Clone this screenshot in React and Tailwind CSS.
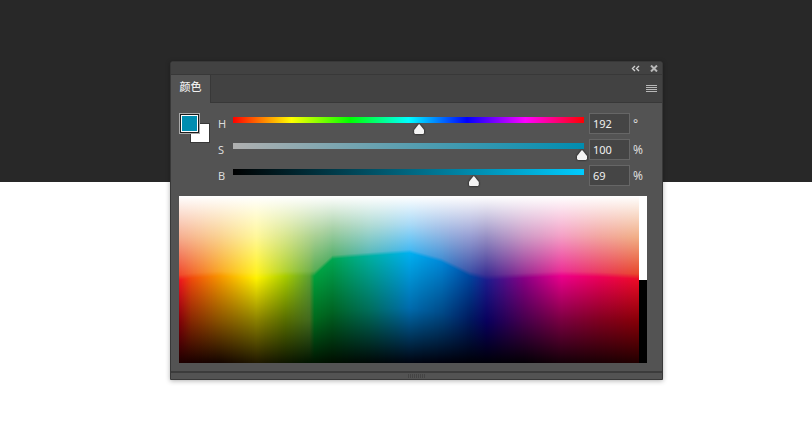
import React, { useEffect, useRef, useState } from "react";

// One entry per column of the ramp: x, height of the full-strength ridge,
// then the tint and rim above it, the ridge itself, the shade below it and the base.
const RAMP = [
  { x: 0, ridge: 84, tint: [245, 172, 142], rim: [240, 70, 44], full: [237, 20, 30], shade: [128, 0, 8], base: [30, 0, 0] },
  { x: 12, ridge: 82, tint: [247, 184, 144], rim: [242, 104, 46], full: [240, 74, 12], shade: [134, 40, 2], base: [26, 0, 0] },
  { x: 40, ridge: 80, tint: [250, 210, 146], rim: [249, 168, 40], full: [248, 150, 0], shade: [138, 84, 0], base: [20, 4, 0] },
  { x: 77, ridge: 82, tint: [255, 247, 152], rim: [255, 242, 32], full: [255, 242, 0], shade: [138, 128, 0], base: [32, 24, 0] },
  { x: 106, ridge: 80, tint: [216, 230, 144], rim: [178, 210, 50], full: [168, 204, 0], shade: [88, 110, 0], base: [14, 22, 0] },
  { x: 130, ridge: 80, tint: [178, 212, 146], rim: [116, 178, 76], full: [92, 160, 52], shade: [66, 106, 30], base: [0, 20, 0] },
  { x: 135, ridge: 80, tint: [170, 208, 148], rim: [88, 172, 84], full: [0, 160, 60], shade: [0, 104, 28], base: [0, 20, 0] },
  { x: 153, ridge: 63, tint: [170, 210, 170], rim: [92, 178, 112], full: [0, 166, 80], shade: [0, 100, 34], base: [0, 14, 0] },
  { x: 190, ridge: 60, tint: [174, 218, 210], rim: [92, 186, 186], full: [0, 176, 160], shade: [0, 110, 92], base: [0, 8, 6] },
  { x: 230, ridge: 57, tint: [168, 218, 247], rim: [72, 186, 242], full: [0, 176, 240], shade: [0, 108, 174], base: [0, 4, 16] },
  { x: 262, ridge: 66, tint: [162, 190, 230], rim: [72, 146, 212], full: [0, 134, 214], shade: [0, 74, 136], base: [0, 0, 12] },
  { x: 290, ridge: 80, tint: [152, 160, 212], rim: [62, 84, 168], full: [0, 70, 158], shade: [0, 26, 94], base: [0, 0, 8] },
  { x: 307, ridge: 84, tint: [148, 140, 194], rim: [58, 46, 146], full: [28, 28, 140], shade: [8, 0, 92], base: [0, 0, 8] },
  { x: 345, ridge: 82, tint: [204, 154, 198], rim: [152, 48, 148], full: [136, 0, 132], shade: [70, 0, 76], base: [4, 0, 6] },
  { x: 382, ridge: 80, tint: [244, 160, 198], rim: [236, 48, 150], full: [236, 0, 140], shade: [124, 0, 66], base: [20, 0, 8] },
  { x: 420, ridge: 81, tint: [242, 166, 160], rim: [234, 60, 96], full: [236, 0, 88], shade: [128, 0, 32], base: [26, 0, 4] },
  { x: 460, ridge: 83, tint: [241, 174, 132], rim: [232, 72, 40], full: [236, 12, 36], shade: [134, 0, 6], base: [34, 0, 0] },
];
const RAMP_W = 460;
const RAMP_H = 167;

const mix = (a, b, t) => a + (b - a) * t;
const mixColor = (a, b, t) => a.map((v, i) => Math.round(mix(v, b[i], t)));
const rgb = (c) => `rgb(${c.join(",")})`;

const hsbToRgb = (h, s, b) => {
  const f = (n) => {
    const k = (n + h / 60) % 6;
    return Math.round(255 * (b / 100) * (1 - (s / 100) * Math.max(0, Math.min(k, 4 - k, 1))));
  };
  return [f(5), f(3), f(1)];
};

function ColorRamp() {
  const ref = useRef(null);

  useEffect(() => {
    const ctx = ref.current.getContext("2d");
    for (let x = 0; x < RAMP_W; x++) {
      const i = RAMP.findIndex((c, n) => n > 0 && x <= c.x);
      const a = RAMP[i - 1];
      const b = RAMP[i];
      const t = (x - a.x) / (b.x - a.x);
      const ridge = mix(a.ridge, b.ridge, t) / RAMP_H;
      const g = ctx.createLinearGradient(0, 0, 0, RAMP_H);
      g.addColorStop(0, "#fff");
      g.addColorStop(ridge * 0.5, rgb(mixColor(a.tint, b.tint, t)));
      g.addColorStop(ridge * 0.94, rgb(mixColor(a.rim, b.rim, t)));
      g.addColorStop(ridge, rgb(mixColor(a.full, b.full, t)));
      g.addColorStop(mix(ridge, 1, 0.5), rgb(mixColor(a.shade, b.shade, t)));
      g.addColorStop(1, rgb(mixColor(a.base, b.base, t)));
      ctx.fillStyle = g;
      ctx.fillRect(x, 0, 1, RAMP_H);
    }
  }, []);

  return <canvas ref={ref} width={RAMP_W} height={RAMP_H} className="block h-[167px] w-full min-w-0 flex-1" />;
}

function ChannelRow({ id, label, unit, max, value, onChange, track }) {
  const change = (e) => onChange(Math.max(0, Math.min(max, Number(e.target.value) || 0)));

  return (
    <div className="flex h-[21px] items-center">
      <label htmlFor={id} className="w-[15px] shrink-0">{label}</label>
      <div className="h-[21px] min-w-0 flex-1 pt-1">
        <div className="h-1.5" style={{ background: track }} />
        <div className="-mr-[3px] -ml-[5px] flex">
          <input
            type="range"
            min="0"
            max={max}
            value={value}
            onChange={change}
            aria-label={`${label} slider`}
            className="m-0 mt-px h-[10px] w-full appearance-none bg-transparent drop-shadow-[0_0_1px_#111] focus:outline-none [&::-webkit-slider-thumb]:h-[10px] [&::-webkit-slider-thumb]:w-[10px] [&::-webkit-slider-thumb]:appearance-none [&::-webkit-slider-thumb]:bg-[#f4f4f4] [&::-webkit-slider-thumb]:[clip-path:polygon(50%_0,60%_10%,100%_60%,100%_90%,90%_100%,10%_100%,0_90%,0_60%,40%_10%)]"
          />
        </div>
      </div>
      <input
        id={id}
        type="text"
        value={value}
        onChange={change}
        className="ml-[5px] h-[21px] w-[41px] shrink-0 border border-[#666] bg-[#454545] px-[3px] text-[#f0f0f0] focus:outline-none"
      />
      <span className="w-8 shrink-0 pl-[3px] text-xs">{unit}</span>
    </div>
  );
}

export default function App() {
  const [h, setH] = useState(192);
  const [s, setS] = useState(100);
  const [b, setB] = useState(69);
  const current = rgb(hsbToRgb(h, s, b));

  return (
    <div className="min-h-screen bg-[linear-gradient(#282828_182px,#fff_182px)] pt-[61px] pr-[149px] pb-10 pl-[170px] font-['Noto_Sans','Noto_Sans_CJK_SC',sans-serif] text-[11px] leading-4 text-[#dcdcdc]">
      <section className="overflow-hidden rounded-t-[3px] border border-[#383838] bg-[#535353] shadow-[0_1px_5px_rgba(0,0,0,0.3)]">
        <div className="flex h-[13px] items-center justify-end gap-[10px] border-b border-[#383838] bg-[#424242] pr-1 text-[#d0d0d0]">
          <button type="button" aria-label="Collapse">
            <svg width="9" height="7" viewBox="0 0 9 7" fill="none" stroke="currentColor" strokeWidth="1.4" className="block">
              <path d="M4 1 1.5 3.5 4 6M8 1 5.5 3.5 8 6" />
            </svg>
          </button>
          <button type="button" aria-label="Close">
            <svg width="8" height="7" viewBox="0 0 8 7" fill="none" stroke="#b8b8b8" strokeWidth="2" className="block">
              <path d="M1 .5 7 6.5M7 .5 1 6.5" />
            </svg>
          </button>
        </div>

        <div className="flex h-7 items-stretch bg-[#424242]">
          <button type="button" className="w-10 border-r border-[#383838] bg-[#535353] pb-1 font-medium text-[#f0f0f0]">
            颜色
          </button>
          <div className="flex flex-1 items-center justify-end border-b border-[#383838] pr-[5px]">
            <button type="button" aria-label="Panel menu">
              <svg width="11" height="8" viewBox="0 0 11 8" stroke="#b8b8b8" className="block">
                <path d="M0 .5H11M0 2.5H11M0 4.5H11M0 6.5H11" />
              </svg>
            </button>
          </div>
        </div>

        <div className="flex pt-[10px] pl-2">
          <div className="relative h-[30px] w-[39px] shrink-0">
            <button
              type="button"
              aria-label="Background color"
              className="absolute top-[11px] left-3 h-[18px] w-[18px] bg-white ring-1 ring-[#383838]"
            />
            <button
              type="button"
              aria-label="Foreground color"
              className="absolute top-0 left-0 h-[21px] w-[21px] border border-[#aaa] bg-[#1c1c1c] p-px"
            >
              <span className="block h-full w-full border border-white" style={{ background: current }} />
            </button>
          </div>
          <div className="flex min-w-0 flex-1 flex-col gap-[5px]">
            <ChannelRow id="hue" label="H" unit="°" max={360} value={h} onChange={setH}
              track="linear-gradient(to right,#f00,#ff0,#0f0,#0ff,#00f,#f0f,#f00)" />
            <ChannelRow id="saturation" label="S" unit="%" max={100} value={s} onChange={setS}
              track={`linear-gradient(to right,${rgb(hsbToRgb(h, 0, b))},${rgb(hsbToRgb(h, 100, b))})`} />
            <ChannelRow id="brightness" label="B" unit="%" max={100} value={b} onChange={setB}
              track={`linear-gradient(to right,#000,${rgb(hsbToRgb(h, s, 100))})`} />
          </div>
        </div>

        <div className="flex pt-[10px] pr-[15px] pb-2 pl-2">
          <ColorRamp />
          <div className="flex w-2 shrink-0 flex-col">
            <button type="button" aria-label="White" className="flex-1 bg-white" />
            <button type="button" aria-label="Black" className="flex-1 bg-black" />
          </div>
        </div>

        <div className="flex h-2 items-center justify-center border-t-2 border-[#3c3c3c]">
          <svg width="18" height="4" viewBox="0 0 18 4" stroke="#444">
            <path d="M.5 0V4M2.5 0V4M4.5 0V4M6.5 0V4M8.5 0V4M10.5 0V4M12.5 0V4M14.5 0V4M16.5 0V4" />
          </svg>
        </div>
      </section>
    </div>
  );
}
